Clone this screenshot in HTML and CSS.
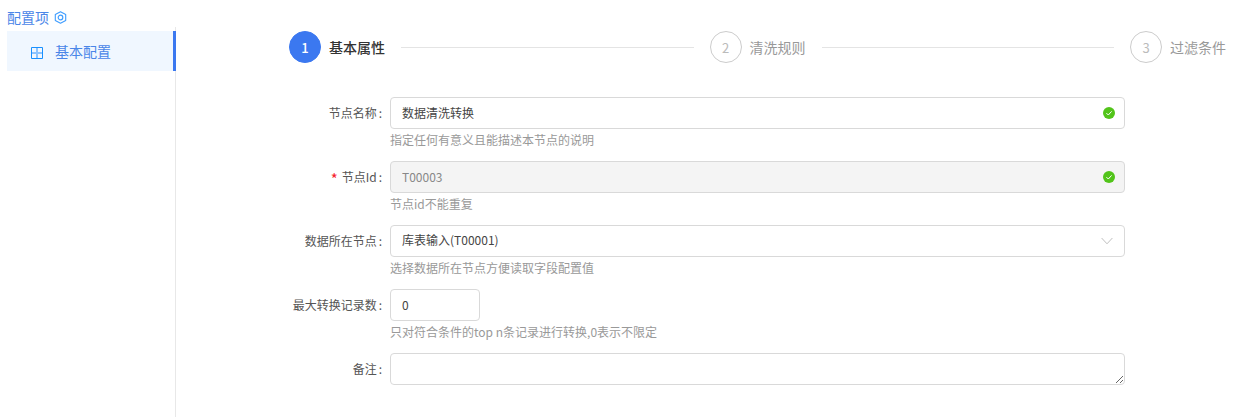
FILE: index.html
```html
<!DOCTYPE html>
<html lang="zh-CN">
<head>
    <meta charset="UTF-8">
    <meta name="viewport" content="width=device-width, initial-scale=1.0">
    <title>节点配置</title>
    <link rel="stylesheet" href="styles.css">
</head>
<body>
    <div class="page">
        <aside class="side">
            <div class="side-title">配置项
                <svg class="side-title-icon" viewBox="0 0 13 13" width="13" height="13">
                    <path d="M6.5.7l5.2 2.9v5.8l-5.2 2.9-5.2-2.9V3.600z" fill="none" stroke="#3f9dff" stroke-width="1.100" stroke-linejoin="round"/>
                    <circle cx="6.500" cy="6.500" r="2.300" fill="none" stroke="#3f9dff" stroke-width="1.200"/>
                </svg>
            </div>
            <div class="side-menu">
                <div class="side-item">
                    <svg class="side-item-icon" viewBox="0 0 12 12" width="12" height="12">
                        <path d="M6 1v10M1 6h10" fill="none" stroke="#8cc4ff" stroke-width="2"/>
                        <path d="M.5.5h11v11H.5z" fill="none" stroke="#1890ff" stroke-width="1"/>
                    </svg>
                    <span>基本配置</span>
                </div>
            </div>
        </aside>
        <main class="main">
            <div class="steps">
                <div class="step active"><span class="step-num">1</span><span class="step-label">基本属性</span></div>
                <div class="step-line"></div>
                <div class="step"><span class="step-num">2</span><span class="step-label">清洗规则</span></div>
                <div class="step-line"></div>
                <div class="step"><span class="step-num">3</span><span class="step-label">过滤条件</span></div>
            </div>
            <form class="form">
                <div class="form-row">
                    <label class="form-label">节点名称</label>
                    <div class="form-body">
                        <div class="control">
                            <input class="input" type="text" value="数据清洗转换">
                            <svg class="check" viewBox="0 0 12 12" width="12" height="12">
                                <circle cx="6" cy="6" r="6" fill="#52c41a"/>
                                <path d="M3.4 6.1l1.9 1.9 3.3-3.6" fill="none" stroke="#fff" stroke-width="1"/>
                            </svg>
                        </div>
                        <div class="hint">指定任何有意义且能描述本节点的说明</div>
                    </div>
                </div>
                <div class="form-row">
                    <label class="form-label"><span class="star">*</span>节点Id</label>
                    <div class="form-body">
                        <div class="control">
                            <input class="input disabled" type="text" value="T00003" disabled>
                            <svg class="check" viewBox="0 0 12 12" width="12" height="12">
                                <circle cx="6" cy="6" r="6" fill="#52c41a"/>
                                <path d="M3.4 6.1l1.9 1.9 3.3-3.6" fill="none" stroke="#fff" stroke-width="1"/>
                            </svg>
                        </div>
                        <div class="hint">节点id不能重复</div>
                    </div>
                </div>
                <div class="form-row">
                    <label class="form-label">数据所在节点</label>
                    <div class="form-body">
                        <div class="control">
                            <div class="input select">库表输入(T00001)</div>
                            <svg class="arrow" viewBox="0 0 12 8" width="12" height="8">
                                <path d="M.6 1l5.4 5.8L11.4 1" fill="none" stroke="#bfbfbf" stroke-width="1"/>
                            </svg>
                        </div>
                        <div class="hint">选择数据所在节点方便读取字段配置值</div>
                    </div>
                </div>
                <div class="form-row">
                    <label class="form-label">最大转换记录数</label>
                    <div class="form-body">
                        <input class="input number" type="text" value="0">
                        <div class="hint">只对符合条件的top n条记录进行转换,0表示不限定</div>
                    </div>
                </div>
                <div class="form-row">
                    <label class="form-label">备注</label>
                    <div class="form-body">
                        <textarea class="input textarea"></textarea>
                    </div>
                </div>
            </form>
        </main>
    </div>
</body>
</html>
```

FILE: styles.css
```css
* {
    box-sizing: border-box;
}
html, body {
    height: 100%;
}
body {
    margin: 0;
    font-family: "Noto Sans CJK SC", "Noto Sans", sans-serif;
    font-size: 12px;
    color: #333;
    background-color: #fff;
    overflow: hidden;
}
.page {
    display: flex;
    height: 417px;
}
.side {
    width: 176px;
    flex: none;
    padding-top: 7px;
}
.side-title {
    display: flex;
    align-items: center;
    gap: 5px;
    height: 20px;
    padding-left: 7px;
    font-size: 14px;
    color: #4a86e8;
}
.side-title-icon {
    flex: none;
    margin-top: 1px;
}
.side-menu {
    height: 390px;
    padding-top: 4px;
    border-right: 1px solid #e8e8e8;
}
.side-item {
    display: flex;
    align-items: center;
    gap: 12px;
    height: 40px;
    margin-left: 7px;
    margin-right: -1px;
    padding-left: 24px;
    font-size: 14px;
    color: #4a86e8;
    background-color: #f0f7ff;
    border-right: 3px solid #3b78f0;
}
.side-item-icon {
    flex: none;
    margin-top: 3px;
}
.main {
    flex: 1;
    padding: 31px 17px 0 113px;
}
.steps {
    display: flex;
    align-items: center;
    height: 32px;
}
.step {
    display: flex;
    align-items: center;
    gap: 8px;
    color: #999;
    font-size: 14px;
}
.step-num {
    display: flex;
    align-items: center;
    justify-content: center;
    width: 32px;
    height: 32px;
    border: 1px solid #ccc;
    border-radius: 50%;
    color: #bbb;
    font-size: 13px;
}
.step.active {
    color: #333;
    font-weight: 500;
}
.step.active .step-num {
    background-color: #3b78f0;
    border-color: #3b78f0;
    color: #fff;
}
.step-line {
    flex: 1;
    height: 1px;
    margin: 0 16px;
    background-color: #e4e4e4;
}
.form {
    margin-top: 34px;
}
.form-row {
    display: flex;
    min-height: 64px;
}
.form-label {
    width: 101px;
    flex: none;
    height: 32px;
    line-height: 32px;
    text-align: right;
    color: #555;
    white-space: nowrap;
}
.form-label::after {
    content: ":";
    margin: 0 8px 0 2px;
}
.star {
    margin-right: 4px;
    font-size: 15px;
    vertical-align: -3px;
    line-height: 1;
    color: #f5222d;
}
.form-body {
    width: 735px;
    flex: none;
}
.control {
    position: relative;
}
.input {
    display: block;
    width: 100%;
    height: 32px;
    padding: 0 11px 2px;
    font-family: inherit;
    font-size: 12px;
    line-height: 28px;
    color: #444;
    background-color: #fff;
    border: 1px solid #d9d9d9;
    border-radius: 4px;
    outline: none;
}
.disabled {
    color: #888;
    background-color: #f4f4f4;
}
.number {
    width: 90px;
}
.textarea {
    min-height: 32px;
    resize: vertical;
}
.check {
    position: absolute;
    top: 10px;
    right: 10px;
}
.arrow {
    position: absolute;
    top: 12px;
    right: 12px;
}
.hint {
    height: 22px;
    padding-top: 1px;
    line-height: 20px;
    color: #999;
}
```
